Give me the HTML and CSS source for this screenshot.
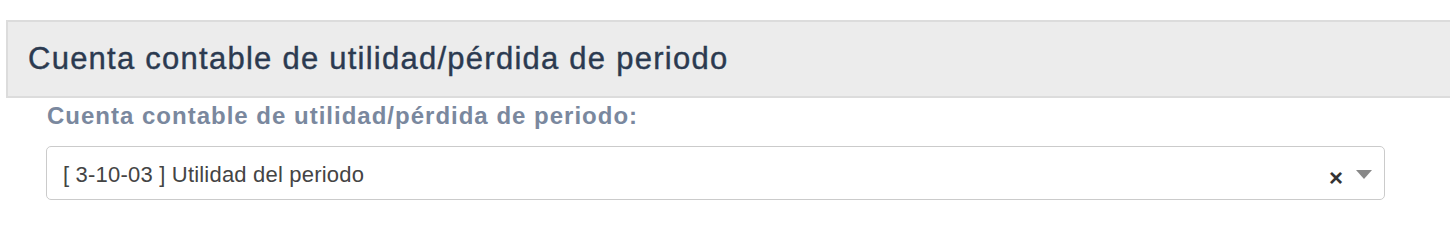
FILE: index.html
```html
<!doctype html>
<html lang="es">
<head>
    <meta charset="UTF-8">
    <title>Cuenta contable de utilidad/pérdida de periodo</title>
    <link rel="stylesheet" href="styles.css">
</head>
<body>
<div class="panel_head">
    <h3>Cuenta contable de utilidad/pérdida de periodo</h3>
</div>
<div class="form_group">
    <label class="form_label">Cuenta contable de utilidad/pérdida de periodo:</label>
    <div class="select_box">
        <span class="select_text">[ 3-10-03 ] Utilidad del periodo</span>
        <span class="select_clear">&times;</span>
        <span class="select_arrow"></span>
    </div>
</div>
</body>
</html>
```

FILE: styles.css
```css
* {
    margin: 0;
    padding: 0;
    box-sizing: border-box;
}

body {
    font-family: "Liberation Sans", Arial, sans-serif;
    background: #fff;
}

.panel_head {
    margin: 20px 0 0 6px;
    height: 78px;
    padding-left: 20px;
    background: #ececec;
    border: 2px solid #dcdcdc;
    border-right: none;
    display: flex;
    align-items: center;
}

.panel_head h3 {
    font-size: 31px;
    font-weight: normal;
    letter-spacing: 1.25px;
    -webkit-text-stroke: 0.4px #2b3a50;
    color: #2b3a50;
}

.form_group {
    padding: 4px 65px 0 46px;
}

.form_label {
    display: block;
    font-size: 24px;
    font-weight: bold;
    letter-spacing: 1px;
    color: #7a889e;
    padding-left: 1px;
    margin-bottom: 16px;
}

.select_box {
    height: 54px;
    border: 1px solid #cbcbcb;
    border-radius: 5px;
    display: flex;
    align-items: center;
    padding: 3px 12px 0 16px;
}

.select_text {
    flex: 1;
    font-size: 22px;
    letter-spacing: 0.2px;
    color: #444;
}

.select_clear {
    font-size: 24px;
    font-weight: bold;
    color: #333;
    margin-top: 6px;
    margin-right: 13px;
}

.select_arrow {
    width: 0;
    height: 0;
    border-left: 8px solid transparent;
    border-right: 8px solid transparent;
    border-top: 9px solid #888;
    margin-top: -1px;
}
```
